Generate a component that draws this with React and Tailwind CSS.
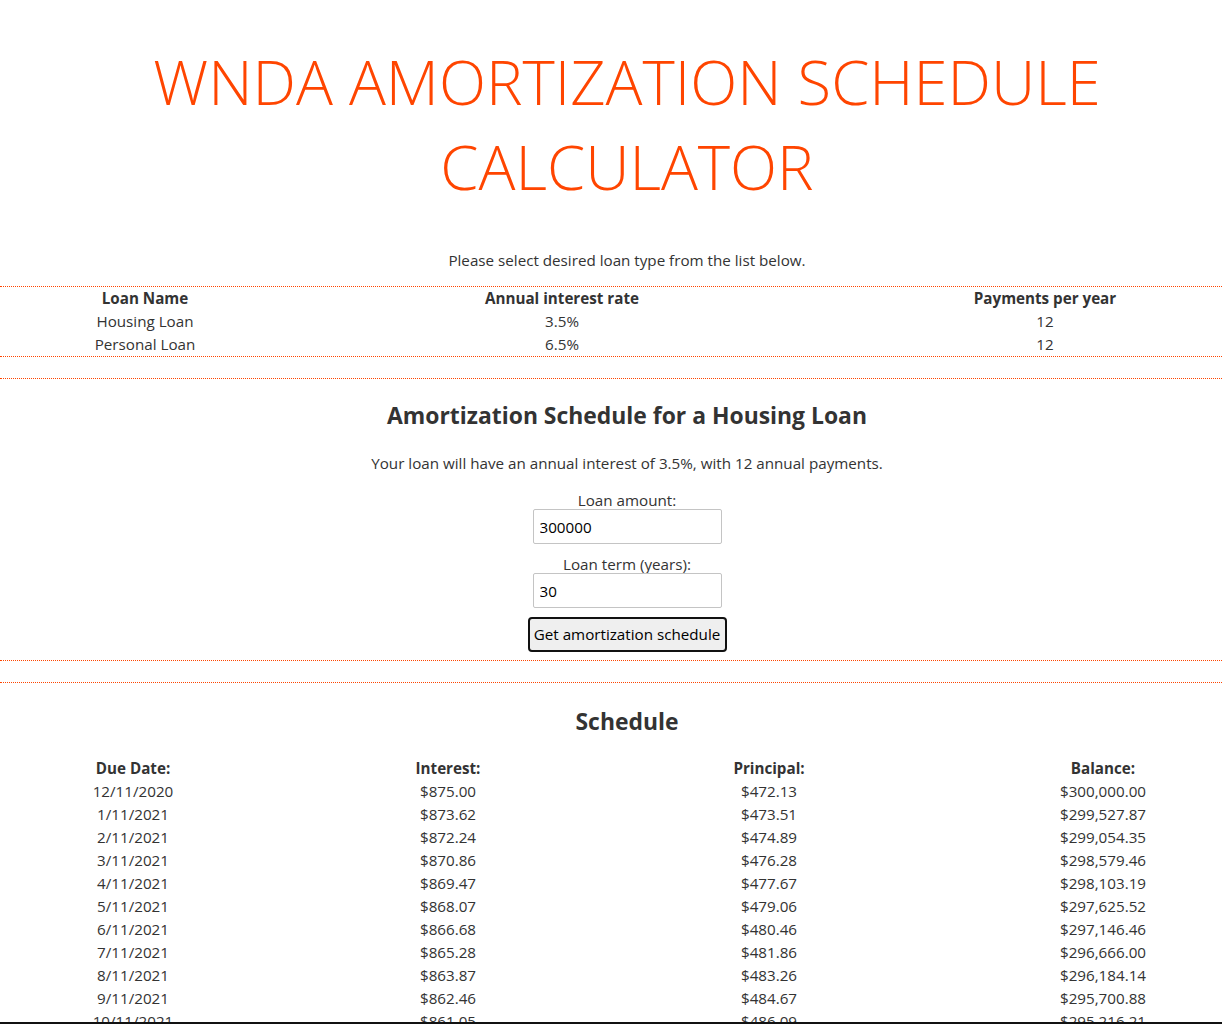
import React, { useState } from "react";

const loans = [
  { name: "Housing Loan", rate: "3.5%", payments: 12 },
  { name: "Personal Loan", rate: "6.5%", payments: 12 },
];

// build the schedule rows from the loan figures
const buildSchedule = (amount, years, annualRate, perYear, count) => {
  const r = annualRate / perYear;
  const n = years * perYear;
  const payment = (amount * r) / (1 - Math.pow(1 + r, -n));
  const money = (v) =>
    "$" + v.toLocaleString("en-US", { minimumFractionDigits: 2, maximumFractionDigits: 2 });
  let balance = amount;
  const rows = [];
  for (let i = 0; i < count; i++) {
    const d = new Date(2020, 11 + i, 11);
    const interest = balance * r;
    const principal = payment - interest;
    rows.push({
      date: `${d.getMonth() + 1}/${d.getDate()}/${d.getFullYear()}`,
      interest: money(interest),
      principal: money(principal),
      balance: money(balance),
    });
    balance -= principal;
  }
  return rows;
};

const App = () => {
  const [amount, setAmount] = useState("300000");
  const [term, setTerm] = useState("30");
  const rows = buildSchedule(300000, 30, 0.035, 12, 11);

  return (
    <div className="min-h-screen bg-white text-[#333] font-['Segoe_UI','Open_Sans',sans-serif] text-[15.2px]">
      <h1 className="pt-[39px] pl-8 text-center text-[61.5px] font-light leading-[85px] text-[#ff4500]">
        WNDA AMORTIZATION SCHEDULE
        <br />
        CALCULATOR
      </h1>

      <p className="mt-[40px] pl-8 text-center leading-[23px]">
        Please select desired loan type from the list below.
      </p>

      {/* loan types */}
      <div className="mt-[14px] border-y border-dotted border-[#ff4500] leading-[23px]">
        <div className="grid grid-cols-[290px_544px_1fr] font-bold">
          <div className="text-center">Loan Name</div>
          <div className="text-center">Annual interest rate</div>
          <div className="pl-[34px] text-center">Payments per year</div>
        </div>
        {loans.map((loan) => (
          <div key={loan.name} className="grid grid-cols-[290px_544px_1fr]">
            <div className="text-center">{loan.name}</div>
            <div className="text-center">{loan.rate}</div>
            <div className="pl-[34px] text-center">{loan.payments}</div>
          </div>
        ))}
      </div>

      {/* calculator form */}
      <div className="mt-[21px] border-y border-dotted border-[#ff4500] pb-[8px] pl-8">
        <h2 className="pt-[21px] text-center text-[22.9px] font-bold leading-[32px]">
          Amortization Schedule for a Housing Loan
        </h2>
        <p className="mt-[20px] text-center leading-[23px]">
          Your loan will have an annual interest of 3.5%, with 12 annual payments.
        </p>
        <div className="mt-[16px] flex flex-col items-center">
          <label className="leading-[18px]">Loan amount:</label>
          <input
            className="h-[35px] w-[189px] rounded-[2px] border border-[#c4c4c4] px-[6px] text-black outline-none"
            value={amount}
            onChange={(e) => setAmount(e.target.value)}
          />
          <label className="mt-[11px] leading-[18px]">Loan term (years):</label>
          <input
            className="h-[35px] w-[189px] rounded-[2px] border border-[#c4c4c4] px-[6px] text-black outline-none"
            value={term}
            onChange={(e) => setTerm(e.target.value)}
          />
          <button className="mt-[9px] h-[35px] w-[199px] whitespace-nowrap rounded-[4px] border-2 border-[#111] bg-[#efefef] text-black">
            Get amortization schedule
          </button>
        </div>
      </div>

      {/* schedule */}
      <div className="mt-[21px] border-t border-dotted border-[#ff4500]">
        <h2 className="pt-[23px] pl-8 text-center text-[22.9px] font-bold leading-[32px]">Schedule</h2>
        <div className="mt-[19px] leading-[23px]">
          <div className="grid grid-cols-[266px_364px_278px_1fr] font-bold">
            <div className="text-center">Due Date:</div>
            <div className="text-center">Interest:</div>
            <div className="text-center">Principal:</div>
            <div className="pl-[76px] text-center">Balance:</div>
          </div>
          {rows.map((row) => (
            <div key={row.date} className="grid grid-cols-[266px_364px_278px_1fr]">
              <div className="text-center">{row.date}</div>
              <div className="text-center">{row.interest}</div>
              <div className="text-center">{row.principal}</div>
              <div className="pl-[76px] text-center">{row.balance}</div>
            </div>
          ))}
        </div>
      </div>

      <div className="fixed inset-x-0 bottom-0 h-[2px] bg-[#111]"></div>
    </div>
  );
};

export default App;
